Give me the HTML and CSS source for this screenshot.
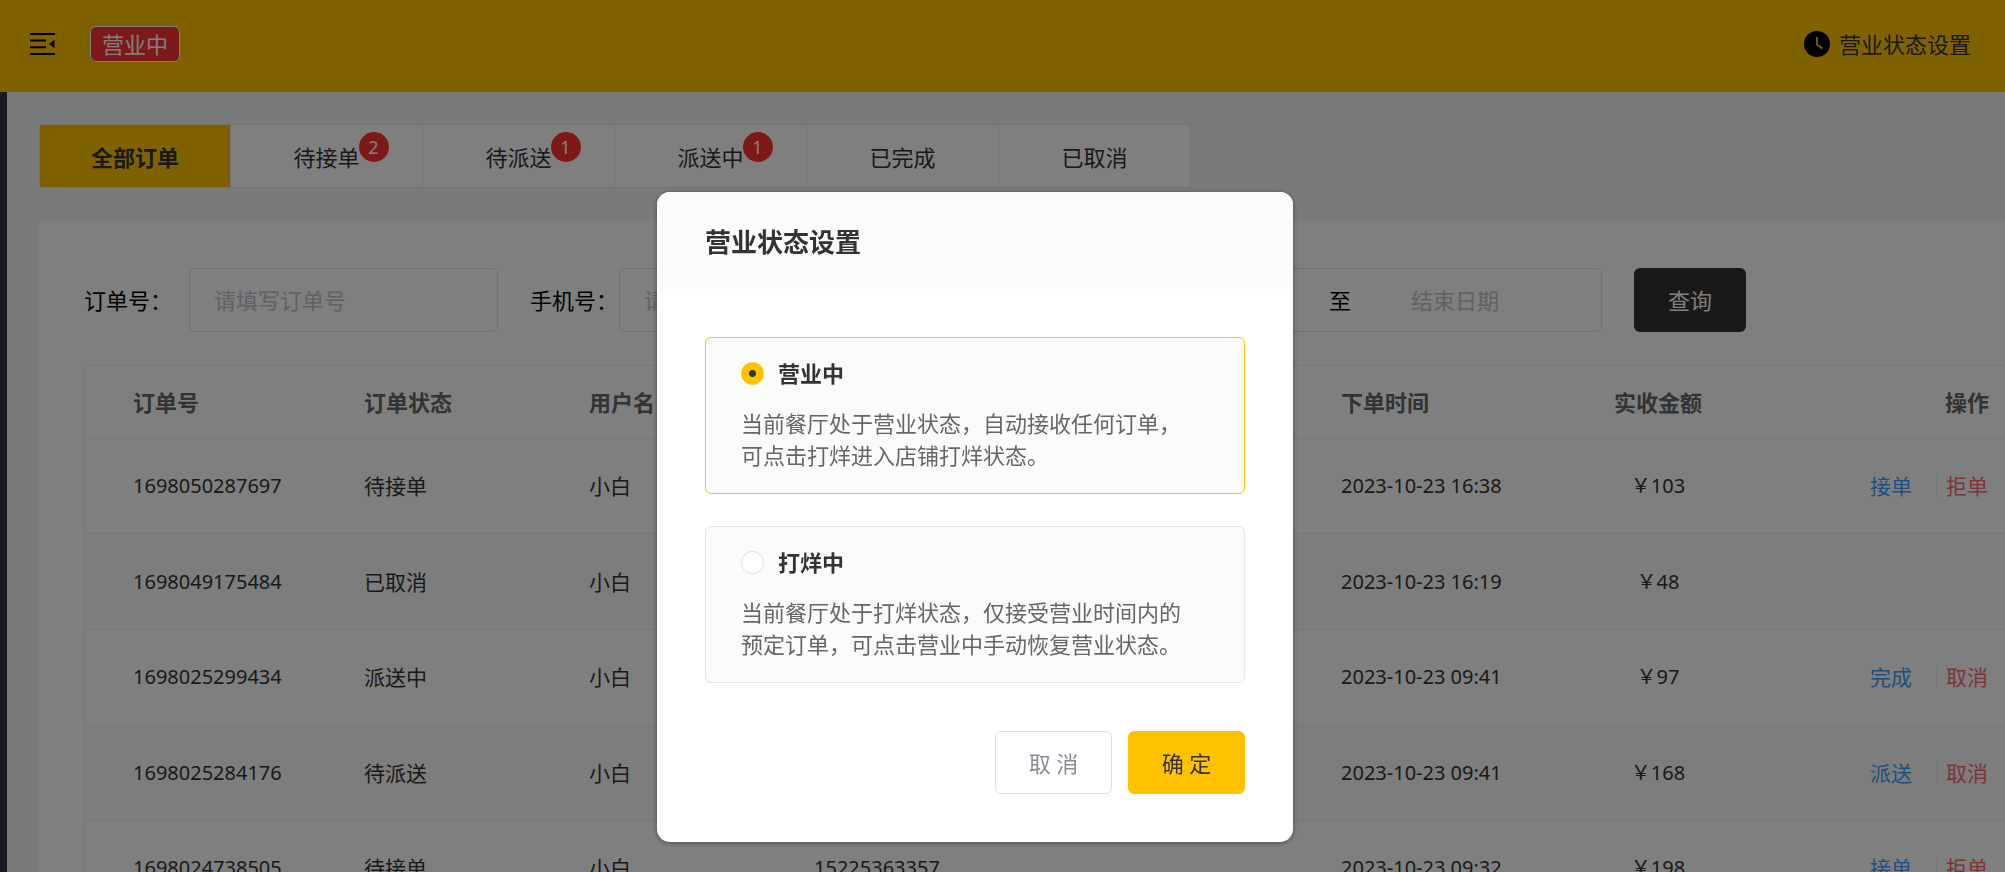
FILE: index.html
```html
<!DOCTYPE html>
<html lang="zh-CN">
<head>
<meta charset="utf-8">
<meta name="viewport" content="width=device-width, initial-scale=1">
<title>订单管理</title>
<link rel="stylesheet" href="styles.css">
</head>
<body>
<div class="app">
  <header class="topbar">
    <button class="icon-button" type="button" aria-label="收起菜单">
      <svg width="25" height="22" viewBox="0 0 25 22" aria-hidden="true">
        <path d="M0 0h25v2H0zM0 6.5h16v2H0zM0 13.3h16v2H0zM0 20h25v2H0zM24.5 6.7v8.6L19 11z" fill="#000"/>
      </svg>
    </button>
    <span class="state-tag">营业中</span>
    <button class="state-setting" type="button">
      <svg width="26" height="26" viewBox="0 0 26 26" aria-hidden="true">
        <circle cx="13" cy="13" r="13" fill="#000"/>
        <path d="M13 6v7.5l5.5 4" fill="none" stroke="#ffc200" stroke-width="1.8"/>
      </svg>
      营业状态设置
    </button>
  </header>

  <div class="body">
    <aside class="rail"></aside>
    <main class="content">
      <nav class="tabs">
        <button class="tab tab-active" type="button">全部订单</button>
        <button class="tab" type="button"><span class="tab-label">待接单<span class="badge">2</span></span></button>
        <button class="tab" type="button"><span class="tab-label">待派送<span class="badge">1</span></span></button>
        <button class="tab" type="button"><span class="tab-label">派送中<span class="badge">1</span></span></button>
        <button class="tab" type="button">已完成</button>
        <button class="tab" type="button">已取消</button>
      </nav>

      <section class="panel">
        <form class="filters">
          <div class="field field-wide">
            <label for="order-no">订单号：</label>
            <input class="text-input" id="order-no" type="text" placeholder="请填写订单号">
          </div>
          <div class="field">
            <label for="phone">手机号：</label>
            <input class="text-input" id="phone" type="text" placeholder="请填写手机号">
          </div>
          <div class="field field-date">
            <label for="date-start">下单时间：</label>
            <div class="date-range">
              <input class="date-input" id="date-start" type="text" placeholder="开始日期">
              <span>至</span>
              <input class="date-input" type="text" placeholder="结束日期" aria-label="结束日期">
            </div>
          </div>
          <button class="search-button" type="button">查询</button>
        </form>

        <table class="orders">
          <colgroup>
            <col class="col-id"><col class="col-mid"><col class="col-mid"><col class="col-mid"><col>
            <col class="col-time"><col class="col-amount"><col class="col-actions">
          </colgroup>
          <thead>
            <tr><th>订单号</th><th>订单状态</th><th>用户名</th><th>手机号</th><th>地址</th><th>下单时间</th><th class="center">实收金额</th><th class="end">操作</th></tr>
          </thead>
          <tbody>
            <tr><td class="num">1698050287697</td><td>待接单</td><td>小白</td><td class="num">15225363357</td><td></td><td class="num">2023-10-23 16:38</td><td class="num center">￥103</td><td><div class="actions"><a class="go" href="#">接单</a><a class="stop" href="#">拒单</a></div></td></tr>
            <tr><td class="num">1698049175484</td><td>已取消</td><td>小白</td><td class="num">15225363357</td><td></td><td class="num">2023-10-23 16:19</td><td class="num center">￥48</td><td></td></tr>
            <tr><td class="num">1698025299434</td><td>派送中</td><td>小白</td><td class="num">15225363357</td><td></td><td class="num">2023-10-23 09:41</td><td class="num center">￥97</td><td><div class="actions"><a class="go" href="#">完成</a><a class="stop" href="#">取消</a></div></td></tr>
            <tr><td class="num">1698025284176</td><td>待派送</td><td>小白</td><td class="num">15225363357</td><td></td><td class="num">2023-10-23 09:41</td><td class="num center">￥168</td><td><div class="actions"><a class="go" href="#">派送</a><a class="stop" href="#">取消</a></div></td></tr>
            <tr><td class="num">1698024738505</td><td>待接单</td><td>小白</td><td class="num">15225363357</td><td></td><td class="num">2023-10-23 09:32</td><td class="num center">￥198</td><td><div class="actions"><a class="go" href="#">接单</a><a class="stop" href="#">拒单</a></div></td></tr>
          </tbody>
        </table>
      </section>
    </main>
  </div>
</div>

<div class="overlay">
  <section class="dialog" role="dialog" aria-modal="true" aria-labelledby="dialog-title">
    <h2 class="dialog-title" id="dialog-title">营业状态设置</h2>
    <form class="dialog-body">
      <div class="options">
        <label class="option option-checked">
          <span class="option-head"><input class="radio" type="radio" name="state" checked>营业中</span>
          <span class="option-text">当前餐厅处于营业状态，自动接收任何订单，<br>可点击打烊进入店铺打烊状态。</span>
        </label>
        <label class="option">
          <span class="option-head"><input class="radio" type="radio" name="state">打烊中</span>
          <span class="option-text">当前餐厅处于打烊状态，仅接受营业时间内的<br>预定订单，可点击营业中手动恢复营业状态。</span>
        </label>
      </div>
      <div class="dialog-actions">
        <button class="dialog-button" type="button">取 消</button>
        <button class="dialog-button dialog-confirm" type="button">确 定</button>
      </div>
    </form>
  </section>
</div>
</body>
</html>
```

FILE: styles.css
```css
* {
  box-sizing: border-box;
}

body {
  margin: 0;
  color: #333;
  font-family: "Noto Sans", "Noto Sans CJK SC", sans-serif;
  font-size: 22px;
  line-height: 32px;
}

button,
input {
  margin: 0;
  font: inherit;
  color: inherit;
}

button {
  padding: 0;
  border: 0;
  background: none;
  cursor: pointer;
}

input::placeholder {
  color: #c0c4cc;
  opacity: 1;
}

a {
  text-decoration: none;
}

.app {
  display: flex;
  flex-direction: column;
  height: 100vh;
  overflow: hidden;
}

.topbar {
  display: flex;
  flex: none;
  align-items: center;
  height: 92px;
  padding: 0 34px 4px 30px;
  background: #ffc200;
}

.icon-button {
  display: flex;
}

.state-tag {
  margin-left: 35px;
  padding: 1px 11px;
  border: 1px solid #fff;
  border-radius: 6px;
  background: #fd3333;
  color: #fff;
}

.state-setting {
  display: flex;
  align-items: center;
  gap: 9px;
  margin-left: auto;
}

.body {
  display: flex;
  flex: 1;
  min-height: 0;
  background: #f3f4f7;
}

.rail {
  flex: none;
  width: 7px;
  background: #343446;
}

.content {
  flex: 1;
  min-width: 0;
  padding: 32px 0 0 32px;
}

.tabs {
  display: flex;
  width: max-content;
  border: 1px solid #e5e4e4;
  background: #fff;
}

.tab {
  width: 192px;
  height: 62px;
  padding-top: 1px;
}

.tab + .tab {
  border-left: 1px solid #e5e4e4;
}

.tab-active {
  width: 190px;
  background: #ffc200;
  font-weight: 700;
}

.tab-label {
  position: relative;
}

.badge {
  position: absolute;
  left: 100%;
  bottom: 10px;
  width: 30px;
  height: 30px;
  margin-left: -1px;
  border-radius: 50%;
  background: #fd3333;
  color: #fff;
  font-size: 18px;
  line-height: 30px;
}

.panel {
  margin-top: 32px;
  padding: 48px 0 0 45px;
  border-radius: 6px 0 0 0;
  background: #fff;
}

.filters {
  display: flex;
  align-items: center;
  gap: 32px;
  color: #000;
}

.field {
  display: flex;
  align-items: center;
  gap: 1px;
}

.field-wide {
  gap: 17px;
}

.field-date {
  gap: 8px;
}

.text-input {
  width: 309px;
  height: 64px;
  padding: 0 24px;
  border: 1px solid #dcdfe6;
  border-radius: 6px;
  background: #fff;
}

.date-range {
  display: flex;
  align-items: center;
  justify-content: space-between;
  width: 524px;
  height: 64px;
  padding: 0 46px;
  border: 1px solid #dcdfe6;
  border-radius: 6px;
}

.date-input {
  width: 200px;
  border: 0;
  background: none;
  text-align: center;
}

.search-button {
  width: 112px;
  height: 64px;
  border-radius: 6px;
  background: #333;
  color: #fff;
}

.orders {
  width: 100%;
  margin-top: 33px;
  border: 1px solid #ebeef5;
  border-right: 0;
  border-spacing: 0;
  table-layout: fixed;
}

.col-id {
  width: 263px;
}

.col-mid {
  width: 225px;
}

.col-time {
  width: 230px;
}

.col-amount {
  width: 206px;
}

.col-actions {
  width: 244px;
}

.orders th,
.orders td {
  padding: 0 16px;
  border-bottom: 1px solid #ebeef5;
  text-align: left;
}

.orders th:first-child,
.orders td:first-child {
  padding-left: 48px;
}

.orders th {
  height: 73px;
  color: #666;
}

.orders td {
  height: 95px;
  font-size: 21px;
}

.orders .num {
  font-size: 20px;
  white-space: nowrap;
}

.orders .center {
  text-align: center;
}

.orders .end {
  text-align: right;
}

.orders tbody tr:nth-child(even) {
  background: #fbfbfb;
}

.orders tbody tr:nth-child(even) td {
  height: 96px;
}

.actions {
  display: flex;
  justify-content: flex-end;
  line-height: 22px;
}

.go {
  padding-right: 24px;
  color: #409eff;
}

.stop {
  padding: 0 1px 0 9px;
  border-left: 1px solid #ebeef5;
  color: #f56c6c;
}

.overlay {
  position: fixed;
  inset: 0;
  display: flex;
  align-items: flex-start;
  justify-content: center;
  padding: 192px 55px 0 0;
  background: rgba(0, 0, 0, 0.5);
}

.dialog {
  width: 636px;
  overflow: hidden;
  border-radius: 13px;
  background: #fff;
  box-shadow: 0 1px 5px rgba(0, 0, 0, 0.4);
}

.dialog-title {
  margin: 0;
  padding: 34px 48px 31px;
  background: #fbfbfa;
  font-size: 26px;
}

.dialog-body {
  padding: 48px;
}

.options {
  display: grid;
  gap: 32px;
}

.option {
  display: grid;
  gap: 18px;
  padding: 19px 35px 22px;
  border: 1px solid #e5e4e4;
  border-radius: 6px;
  background: #fbfbfa;
}

.option-checked {
  border-color: #ffc200;
}

.option-head {
  display: flex;
  align-items: center;
  gap: 14px;
  font-weight: 700;
}

.option-text {
  color: #666;
}

.radio {
  width: 23px;
  height: 23px;
  appearance: none;
  border: 1px solid #dcdfe6;
  border-radius: 50%;
  background: #fff;
}

.radio:checked {
  border-color: #ffc200;
  background: radial-gradient(circle, #333 3px, #ffc200 4px);
}

.dialog-actions {
  display: flex;
  justify-content: flex-end;
  gap: 16px;
  margin-top: 48px;
}

.dialog-button {
  width: 117px;
  height: 63px;
  border: 1px solid #dcdfe6;
  border-radius: 6px;
  color: #878d99;
}

.dialog-confirm {
  border-color: #ffc200;
  background: #ffc200;
  color: #333;
}
```
